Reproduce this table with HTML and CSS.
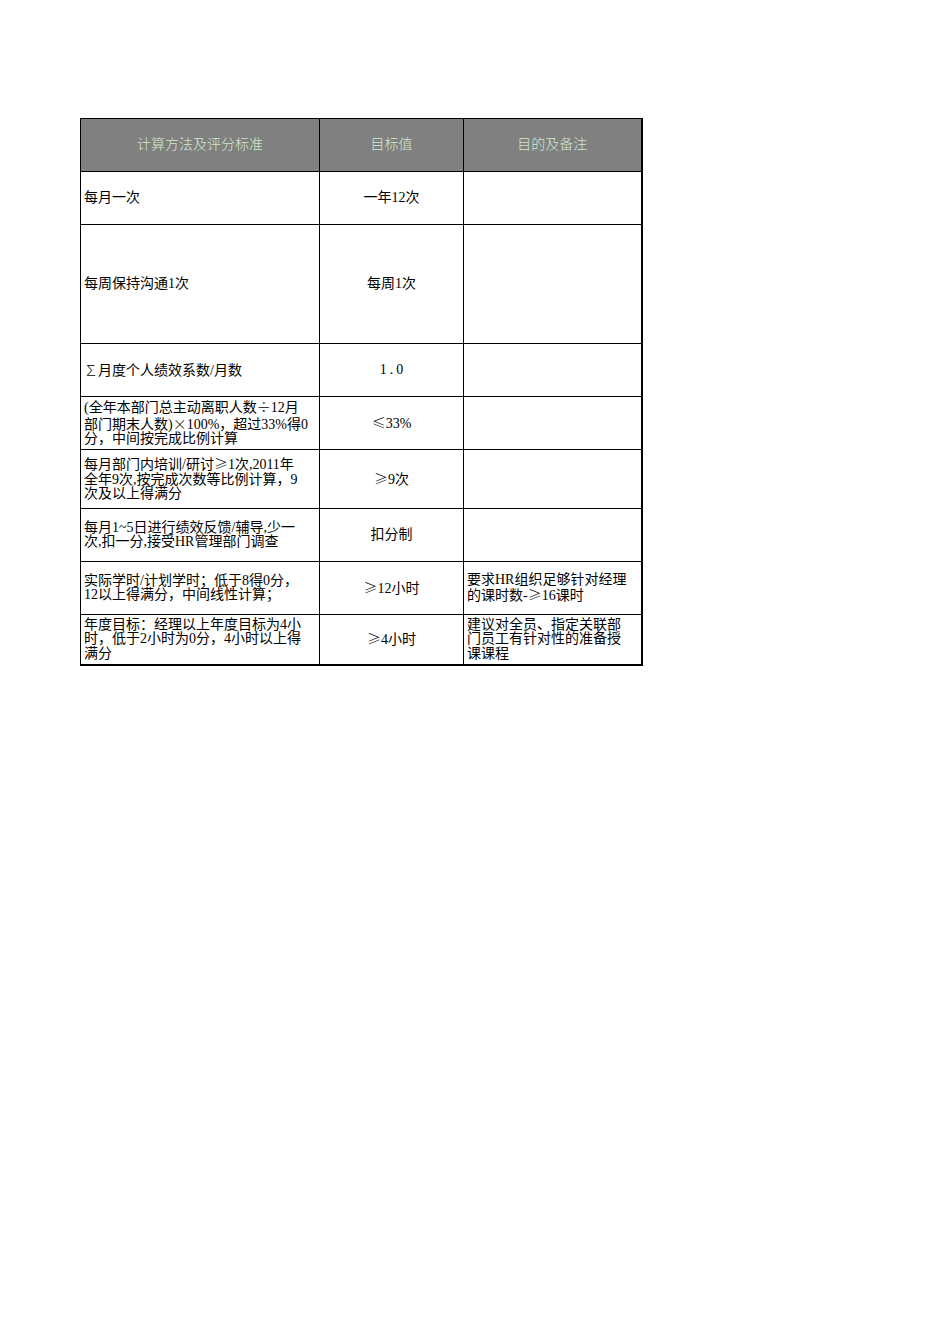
FILE: index.html
```html
<!DOCTYPE html>
<html lang="zh-CN">
<head>
<meta charset="utf-8">
<title>KPI</title>
<link rel="stylesheet" href="styles.css">
</head>
<body>
<table class="sheet">
  <colgroup>
    <col class="c1"><col class="c2"><col class="c3">
  </colgroup>
  <thead>
    <tr class="h53">
      <th>计算方法及评分标准</th>
      <th>目标值</th>
      <th>目的及备注</th>
    </tr>
  </thead>
  <tbody>
    <tr class="h53">
      <td class="l">每月一次</td>
      <td class="c">一年12次</td>
      <td class="l"></td>
    </tr>
    <tr class="h119">
      <td class="l">每周保持沟通1次</td>
      <td class="c">每周1次</td>
      <td class="l"></td>
    </tr>
    <tr class="h53">
      <td class="l"><span class="fw">∑</span>月度个人绩效系数/月数</td>
      <td class="c"><span class="spaced">1.0</span></td>
      <td class="l"></td>
    </tr>
    <tr class="h53">
      <td class="l">(全年本部门总主动离职人数<span class="fw">÷</span>12月<br>部门期末人数)<span class="fw">×</span>100%，超过33%得0<br>分，中间按完成比例计算</td>
      <td class="c"><span class="fw">≤</span>33%</td>
      <td class="l"></td>
    </tr>
    <tr class="h59">
      <td class="l">每月部门内培训/研讨<span class="fw">≥</span>1次,2011年<br>全年9次,按完成次数等比例计算，9<br>次及以上得满分</td>
      <td class="c"><span class="fw">≥</span>9次</td>
      <td class="l"></td>
    </tr>
    <tr class="h53">
      <td class="l">每月1~5日进行绩效反馈/辅导,少一<br>次,扣一分,接受HR管理部门调查</td>
      <td class="c">扣分制</td>
      <td class="l"></td>
    </tr>
    <tr class="h53">
      <td class="l">实际学时/计划学时；低于8得0分，<br>12以上得满分，中间线性计算；</td>
      <td class="c"><span class="fw">≥</span>12小时</td>
      <td class="l">要求HR组织足够针对经理<br>的课时数-<span class="fw">≥</span>16课时</td>
    </tr>
    <tr class="h50">
      <td class="l">年度目标：经理以上年度目标为4小<br>时，低于2小时为0分，4小时以上得<br>满分</td>
      <td class="c"><span class="fw">≥</span>4小时</td>
      <td class="l">建议对全员、指定关联部<br>门员工有针对性的准备授<br>课课程</td>
    </tr>
  </tbody>
</table>
</body>
</html>
```

FILE: styles.css
```css
html, body {
  margin: 0;
  padding: 0;
  background: #ffffff;
}

body {
  padding: 118px 0 0 80px;
  font-family: "Liberation Serif", "Noto Sans CJK SC", serif;
  font-size: 14px;
  color: #000;
}

.sheet {
  border-collapse: collapse;
  table-layout: fixed;
  width: 561px;
  border-right: 2px solid #000;
  border-bottom: 2px solid #000;
}

.c1 { width: 239px; }
.c2 { width: 144px; }
.c3 { width: 178px; }

.sheet th,
.sheet td {
  border: 1px solid #000;
  padding: 0 3px;
  vertical-align: middle;
  line-height: 14.5px;
  white-space: nowrap;
  overflow: hidden;
  font-weight: 400;
}

.sheet th {
  background: #808080;
  color: #cfe8cf;
  text-align: center;
  font-size: 14px;
  font-family: "Noto Sans CJK SC", sans-serif;
  font-weight: 300;
  padding-bottom: 3px;
}

.sheet td.l { text-align: left; }
.sheet td.c { text-align: center; }

.fw {
  font-family: "Noto Sans CJK SC", sans-serif;
  font-weight: 300;
}

.spaced {
  letter-spacing: 3px;
  margin-right: -3px;
}

.h53 { height: 53px; }
.h119 { height: 119px; }
.h59 { height: 59px; }
.h50 { height: 50px; }
```
